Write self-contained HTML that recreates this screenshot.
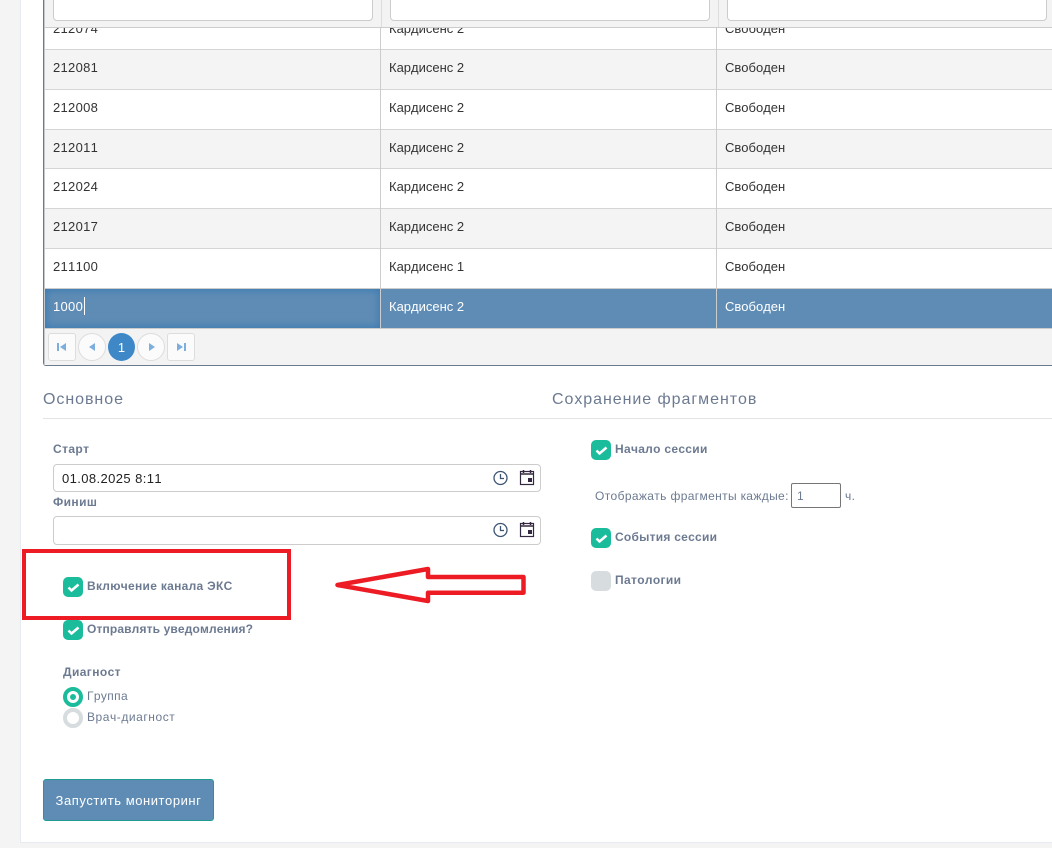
<!DOCTYPE html>
<html><head><meta charset="utf-8">
<style>
html,body{margin:0;padding:0}
body{width:1052px;height:848px;position:relative;overflow:hidden;background:#f4f4f5;font-family:"Liberation Sans",sans-serif;font-size:13px;color:#333;font-kerning:none}
div,span{position:absolute;box-sizing:border-box}
.t{white-space:nowrap;line-height:16px}
.cell{color:#333;font-size:13px}
.id{letter-spacing:.3px}
.h{font-size:16px;color:#6c7a91;letter-spacing:.95px;line-height:20px;white-space:nowrap}
.lb{font-size:12px;font-weight:bold;color:#6c7a91;line-height:16px;white-space:nowrap;letter-spacing:.25px}
.n{font-size:12px;color:#6c7a91;line-height:16px;white-space:nowrap;letter-spacing:.36px}
.line{background:#d5d5d5;height:1px;left:45px;width:1007px}
.f{background:#fff;border:1px solid #ccc;border-radius:4px}
.cb{width:20px;height:20px;border-radius:5px;background:#1abc9c}
.cb svg{position:absolute;left:0;top:0}
.pg{top:333px;height:28px;background:#fbfbfb;border:1px solid #ddd}
.pg svg{position:absolute;left:0;top:0}
</style></head><body>
<div style="left:20px;top:-2px;width:1040px;height:845px;background:#fff;border:1px solid #e7eaf0"></div>

<!-- table -->
<div style="left:43px;top:-2px;width:1012px;height:368px;border:1px solid #6c7a8f;border-top:0;border-radius:0 0 3px 3px;background:#fff"></div>
<div style="left:44px;top:0;width:1px;height:365px;background:#c5c8cc"></div>
<div style="left:45px;top:0;width:1007px;height:27px;background:#f3f3f3"></div>
<div class="f" style="left:53px;top:-8px;width:320px;height:29px"></div>
<div class="f" style="left:390px;top:-8px;width:320px;height:29px"></div>
<div class="f" style="left:727px;top:-8px;width:320px;height:29px"></div>
<div style="left:381px;top:0;width:1px;height:27px;background:#ddd"></div>
<div style="left:718px;top:0;width:1px;height:27px;background:#ddd"></div>

<div style="left:45px;top:50px;width:1007px;height:39px;background:#f4f4f4"></div>
<div style="left:45px;top:130px;width:1007px;height:38px;background:#f4f4f4"></div>
<div style="left:45px;top:209px;width:1007px;height:39px;background:#f4f4f4"></div>
<div style="left:45px;top:289px;width:1007px;height:39px;background:#5f8cb5"></div>
<div style="left:45px;top:289px;width:335px;height:39px;background:#5f8cb5;box-shadow:inset 0 0 7px 2px #3f7db3"></div>

<div class="t cell id" style="left:53px;top:21px;clip-path:inset(7px 0 0 0)">212074</div>
<div class="t cell" style="left:389px;top:21px;clip-path:inset(7px 0 0 0)">Кардисенс 2</div>
<div class="t cell" style="left:725px;top:21px;clip-path:inset(7px 0 0 0)">Свободен</div>

<div class="line" style="top:27px;background:#ccc;height:1px"></div>
<div class="line" style="top:49px"></div>
<div class="line" style="top:89px"></div>
<div class="line" style="top:129px"></div>
<div class="line" style="top:168px"></div>
<div class="line" style="top:208px"></div>
<div class="line" style="top:248px"></div>
<div class="line" style="top:288px;background:#ccc"></div>
<div class="line" style="top:328px;background:#ccc"></div>
<div style="left:380px;top:28px;width:1px;height:300px;background:#ccc"></div>
<div style="left:716px;top:28px;width:1px;height:300px;background:#ccc"></div>
<div style="left:45px;top:329px;width:1007px;height:36px;background:#f3f3f3"></div>

<div class="t cell id" style="left:53px;top:60px">212081</div>
<div class="t cell id" style="left:53px;top:100px">212008</div>
<div class="t cell id" style="left:53px;top:140px">212011</div>
<div class="t cell id" style="left:53px;top:179px">212024</div>
<div class="t cell id" style="left:53px;top:219px">212017</div>
<div class="t cell id" style="left:53px;top:259px">211100</div>
<div class="t cell id" style="left:53px;top:299px;color:#fff">1000</div>
<div style="left:84px;top:297px;width:1px;height:18px;background:#fff"></div>

<div class="t cell" style="left:389px;top:60px">Кардисенс 2</div>
<div class="t cell" style="left:389px;top:100px">Кардисенс 2</div>
<div class="t cell" style="left:389px;top:140px">Кардисенс 2</div>
<div class="t cell" style="left:389px;top:179px">Кардисенс 2</div>
<div class="t cell" style="left:389px;top:219px">Кардисенс 2</div>
<div class="t cell" style="left:389px;top:259px">Кардисенс 1</div>
<div class="t cell" style="left:389px;top:299px;color:#fff">Кардисенс 2</div>

<div class="t cell" style="left:725px;top:60px">Свободен</div>
<div class="t cell" style="left:725px;top:100px">Свободен</div>
<div class="t cell" style="left:725px;top:140px">Свободен</div>
<div class="t cell" style="left:725px;top:179px">Свободен</div>
<div class="t cell" style="left:725px;top:219px">Свободен</div>
<div class="t cell" style="left:725px;top:259px">Свободен</div>
<div class="t cell" style="left:725px;top:299px;color:#fff">Свободен</div>

<!-- pager -->
<div class="pg" style="left:48px;width:28px;border-radius:3px"><svg width="26" height="26"><path d="M8 9h2v8H8zM17 9v8l-6-4z" fill="#7eaedd"/></svg></div>
<div class="pg" style="left:78px;width:28px;border-radius:50%"><svg width="26" height="26"><path d="M16 9v8l-6-4z" fill="#7eaedd"/></svg></div>
<div class="pg" style="left:108px;width:27px;height:28px;border-radius:50%;background:#3f88c8;border:0"></div>
<div class="t" style="left:108px;top:340px;width:27px;text-align:center;color:#fff;font-size:13px">1</div>
<div class="pg" style="left:137px;width:28px;border-radius:50%"><svg width="26" height="26"><path d="M11 9v8l6-4z" fill="#7eaedd"/></svg></div>
<div class="pg" style="left:167px;width:28px;border-radius:3px"><svg width="26" height="26"><path d="M16 9h2v8h-2zM9 9v8l6-4z" fill="#7eaedd"/></svg></div>

<!-- headings -->
<div class="h" style="left:43px;top:390px">Основное</div>
<div class="h" style="left:552px;top:390px">Сохранение фрагментов</div>
<div style="left:43px;top:418px;width:1009px;height:1px;background:#e4e4e4"></div>

<!-- left form -->
<div class="lb" style="left:53px;top:441px;letter-spacing:.4px">Старт</div>
<div class="f" style="left:53px;top:464px;width:488px;height:28px"></div>
<div class="t" style="left:62px;top:471px;color:#222;font-size:13px;letter-spacing:.4px">01.08.2025 8:11</div>
<div class="lb" style="left:53px;top:494px;letter-spacing:.4px">Финиш</div>
<div class="f" style="left:53px;top:516px;width:488px;height:29px"></div>

<svg style="position:absolute;left:492px;top:470px" width="18" height="18" viewBox="0 0 18 18"><circle cx="8.500" cy="8" r="6.500" fill="none" stroke="#3d5570" stroke-width="1.300"/><path d="M8.500 4v4.500H12" fill="none" stroke="#3d5570" stroke-width="1.300"/></svg>
<svg style="position:absolute;left:519px;top:469px" width="17" height="17" viewBox="0 0 17 17"><rect x="1.500" y="2.500" width="13" height="13" fill="none" stroke="#33283f" stroke-width="1.200"/><path d="M1.500 5h13" stroke="#33283f" stroke-width="1.500"/><path d="M4.500 1v3M11.500 1v3" stroke="#33283f" stroke-width="1.500"/><rect x="9" y="9" width="4" height="4" fill="#33283f"/></svg>
<svg style="position:absolute;left:492px;top:522px" width="18" height="18" viewBox="0 0 18 18"><circle cx="8.500" cy="8" r="6.500" fill="none" stroke="#3d5570" stroke-width="1.300"/><path d="M8.500 4v4.500H12" fill="none" stroke="#3d5570" stroke-width="1.300"/></svg>
<svg style="position:absolute;left:519px;top:521px" width="17" height="17" viewBox="0 0 17 17"><rect x="1.500" y="2.500" width="13" height="13" fill="none" stroke="#33283f" stroke-width="1.200"/><path d="M1.500 5h13" stroke="#33283f" stroke-width="1.500"/><path d="M4.500 1v3M11.500 1v3" stroke="#33283f" stroke-width="1.500"/><rect x="9" y="9" width="4" height="4" fill="#33283f"/></svg>

<div class="cb" style="left:63px;top:577px"><svg width="20" height="20"><path d="M5.500 10.500l3 3L15.500 7.500" fill="none" stroke="#fff" stroke-width="2.500"/></svg></div>
<div class="lb" style="left:87px;top:578px;letter-spacing:.3px">Включение канала ЭКС</div>
<div class="cb" style="left:63px;top:620px"><svg width="20" height="20"><path d="M5.500 10.500l3 3L15.500 7.500" fill="none" stroke="#fff" stroke-width="2.500"/></svg></div>
<div class="lb" style="left:87px;top:621px;letter-spacing:.14px">Отправлять уведомления?</div>

<div class="lb" style="left:63px;top:664px;letter-spacing:.4px">Диагност</div>
<div style="left:63px;top:687px;width:20px;height:20px;border-radius:50%;border:4.500px solid #1abc9c;background:#fff"></div>
<div style="left:70px;top:694px;width:6px;height:6px;border-radius:50%;background:#1abc9c"></div>
<div class="n" style="left:87px;top:688px">Группа</div>
<div style="left:63px;top:708px;width:20px;height:20px;border-radius:50%;border:4px solid #d7dcde;background:#fff"></div>
<div class="n" style="left:87px;top:709px;letter-spacing:.55px">Врач-диагност</div>

<div style="left:43px;top:779px;width:171px;height:42px;background:#5f8cb5;border:1px solid #1f9c92;border-radius:3px;color:#fff;font-size:13px;line-height:42px;text-align:center;white-space:nowrap;letter-spacing:.55px">Запустить мониторинг</div>

<!-- right form -->
<div class="cb" style="left:591px;top:440px"><svg width="20" height="20"><path d="M5.500 10.500l3 3L15.500 7.500" fill="none" stroke="#fff" stroke-width="2.500"/></svg></div>
<div class="lb" style="left:615px;top:441px;letter-spacing:.3px">Начало сессии</div>
<div class="n" style="left:595px;top:488px">Отображать фрагменты каждые:</div>
<div style="left:791px;top:483px;width:50px;height:25px;background:#fff;border:1px solid #767676;border-radius:2px"></div>
<div class="n" style="left:797px;top:488px">1</div>
<div class="n" style="left:845px;top:488px">ч.</div>
<div class="cb" style="left:591px;top:528px"><svg width="20" height="20"><path d="M5.500 10.500l3 3L15.500 7.500" fill="none" stroke="#fff" stroke-width="2.500"/></svg></div>
<div class="lb" style="left:615px;top:529px">События сессии</div>
<div class="cb" style="left:591px;top:571px;background:#d7dcde"></div>
<div class="lb" style="left:615px;top:572px;letter-spacing:.35px">Патологии</div>

<!-- annotations -->
<div style="left:22px;top:549px;width:269px;height:71px;border:4.500px solid #ed1c24"></div>
<svg style="position:absolute;left:330px;top:560px" width="200" height="50"><path d="M7.500 25L98 9V17H193.500V32.700H98V41Z" fill="none" stroke="#ed1c24" stroke-width="4.500" stroke-linejoin="round"/></svg>
</body></html>
